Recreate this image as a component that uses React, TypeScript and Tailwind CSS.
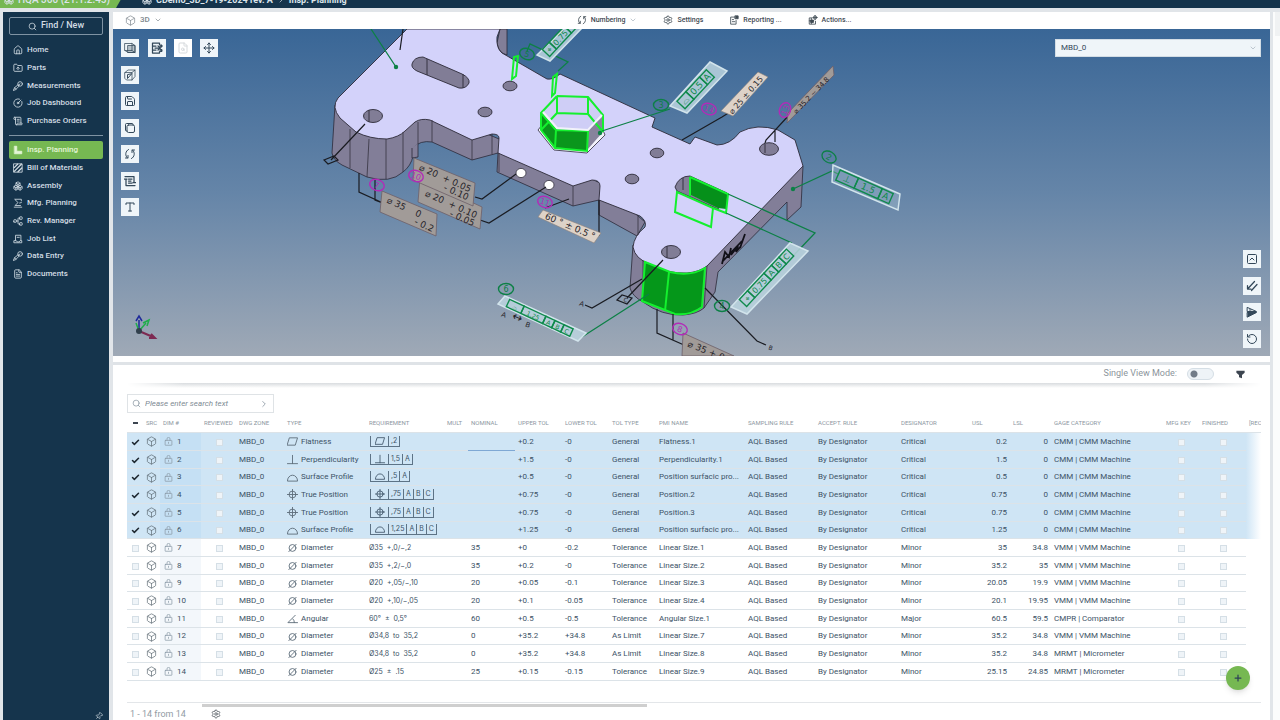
import { ReactNode } from 'react';
import {
  Box,
  Boxes,
  Check,
  ChevronDown,
  ChevronRight,
  CircleGauge,
  FileSearch,
  FileText,
  FolderUp,
  House,
  LucideIcon,
  Move,
  Network,
  Pin,
  Plus,
  RotateCcw,
  Save,
  ScrollText,
  Search,
  Settings,
  SquareChevronUp,
} from 'lucide-react';

interface IconProps {
  className?: string;
}

interface Row {
  id: number;
  type: string;
  requirement: string | string[];
  nominal: string;
  upper: string;
  lower: string;
  tolType: string;
  pmi: string;
  designator: string;
  usl: string;
  lsl: string;
  gage: string;
}

const Svg = ({ className, children }: IconProps & { children: ReactNode }) => (
  <svg viewBox="0 0 24 24" className={className} fill="none" stroke="currentColor" strokeWidth="2" strokeLinecap="round" strokeLinejoin="round">
    {children}
  </svg>
);

const CaliperIcon = ({ className }: IconProps) => (
  <Svg className={className}>
    <path d="M1 22l3-6 8-7 3 3-8 8z" />
    <circle cx="17" cy="7" r="5.5" />
    <path d="M4 16l3 4M13 10l4-3" />
  </Svg>
);

const SquareToolIcon = ({ className }: IconProps) => (
  <Svg className={className}>
    <path d="M4 3h5v12h12v6H4z" fill="currentColor" />
  </Svg>
);

const HatchIcon = ({ className }: IconProps) => (
  <Svg className={className}>
    <rect x="2" y="2" width="20" height="20" />
    <path d="M3 11l8-8M3 20L20 3M12 21l9-9" strokeWidth="3" />
  </Svg>
);

const RobotArmIcon = ({ className }: IconProps) => (
  <Svg className={className}>
    <path d="M20 7V3H4l8 8-7 7h13M3 22h18M16 12l4-1" />
  </Svg>
);

const JobListIcon = ({ className }: IconProps) => (
  <Svg className={className}>
    <path d="M6 15V3h13v12M3 16h5l2 3h5l2-3h4v5H3zM10 8h5" />
  </Svg>
);

const NumberingIcon = ({ className }: IconProps) => (
  <Svg className={className}>
    <path d="M9 3a10 10 0 0 0-2 17M3 20h5v-5M15 21a10 10 0 0 0 2-17M21 4h-5v5" />
  </Svg>
);

const ReportIcon = ({ className }: IconProps) => (
  <Svg className={className}>
    <path d="M13 5H4v17h13v-9M8 11h3M8 16h6" />
    <path d="M15 2h7v7h-7z" fill="currentColor" />
  </Svg>
);

const ActionsIcon = ({ className }: IconProps) => (
  <Svg className={className}>
    <path d="M10 7H3v15h15v-7M3 14h11M8 8v13" />
    <path d="M7 12h6v6H7z" fill="currentColor" />
    <circle cx="17" cy="6" r="4" />
    <path d="M17 1v10M12 6h10" />
  </Svg>
);

const SolidCubeIcon = ({ className }: IconProps) => (
  <Svg className={className}>
    <path d="M2 3h14v14H2zM16 3l6 4v14H8l-6-4M16 17l6 4" strokeWidth="1.5" />
    <path d="M8 7h14v14H8z" fill="currentColor" fillOpacity="0.3" strokeWidth="1.5" />
  </Svg>
);

const SectionCubeIcon = ({ className }: IconProps) => (
  <Svg className={className}>
    <path d="M2 7l6-5h14v13l-6 7H5l-3-3zM2 7h14v15M16 7l6-5" strokeWidth="1.5" />
    <path d="M7 12v7l8-9z" />
  </Svg>
);

const ExportIcon = ({ className }: IconProps) => (
  <Svg className={className}>
    <path d="M17 5V2H3v20h14v-3M3 8h7M3 16h7M8 12h10M14 8l5 4-5 4" strokeWidth="2.5" />
    <path d="M19 6h3v4h-3zM19 15h3v4h-3z" fill="currentColor" />
  </Svg>
);

const CopyIcon = ({ className }: IconProps) => (
  <Svg className={className}>
    <rect x="6" y="6" width="15" height="15" rx="3" />
    <path d="M6 18H5a2 2 0 0 1-2-2V5a2 2 0 0 1 2-2h11a2 2 0 0 1 2 2v1" />
  </Svg>
);

const BalloonIcon = ({ className }: IconProps) => (
  <Svg className={className}>
    <path d="M2 3h18v12M22 21H4V8M1 8h5M18 15h5M9 8h7M9 12h5M9 16h7" strokeWidth="2.5" />
  </Svg>
);

const TextIcon = ({ className }: IconProps) => (
  <Svg className={className}>
    <path d="M4 7V4h16v3M12 4v16M9 20h6" />
  </Svg>
);

const MeasureIcon = ({ className }: IconProps) => (
  <Svg className={className}>
    <path d="M17 3L4 17M3 11v7h7M22 9L11 21" strokeWidth="2.5" />
  </Svg>
);

const FlipIcon = ({ className }: IconProps) => (
  <Svg className={className}>
    <path d="M3 3l18 8H3zM7 8h3" />
    <path d="M3 13h18L3 22z" fill="currentColor" />
  </Svg>
);

const FilterIcon = ({ className }: IconProps) => (
  <svg viewBox="0 0 24 24" className={className} fill="currentColor">
    <path d="M1 2h22v5l-7 6v9l-8-3v-6L1 7z" />
  </svg>
);

const LockIcon = ({ className }: IconProps) => (
  <Svg className={className}>
    <rect x="3" y="9" width="18" height="13" rx="1" />
    <path d="M8 9V5a4 4 0 0 1 8 0v4M12 14v3" />
  </Svg>
);

const GdtIcon = ({ type, className }: IconProps & { type: string }) => (
  <Svg className={className}>
    {type === 'Flatness' && <path d="M6 4h17l-5 16H1z" />}
    {type === 'Perpendicularity' && <path d="M12 3v18M1 21h22" />}
    {type === 'Surface Profile' && <path d="M1 19a11 12 0 0 1 22 0z" />}
    {type === 'Diameter' && (
      <>
        <circle cx="12" cy="13" r="7.5" />
        <path d="M4 21L20 5" />
      </>
    )}
    {type === 'Angular' && <path d="M23 21H2L18 5M13 13a10 10 0 0 1 3 8" />}
    {type === 'True Position' && (
      <>
        <circle cx="12" cy="12" r="7.5" />
        <path d="M12 0v24M0 12h24" />
      </>
    )}
  </Svg>
);

const mainLinks = [
  { label: 'Home', icon: House },
  { label: 'Parts', icon: FolderUp },
  { label: 'Measurements', icon: CaliperIcon },
  { label: 'Job Dashboard', icon: CircleGauge },
  { label: 'Purchase Orders', icon: ScrollText },
];

const moduleLinks = [
  { label: 'Insp. Planning', icon: SquareToolIcon, active: true },
  { label: 'Bill of Materials', icon: HatchIcon },
  { label: 'Assembly', icon: Boxes },
  { label: 'Mfg. Planning', icon: RobotArmIcon },
  { label: 'Rev. Manager', icon: Network, rotate: true },
  { label: 'Job List', icon: JobListIcon },
  { label: 'Data Entry', icon: CaliperIcon },
  { label: 'Documents', icon: FileText },
];

const columns = [
  { label: 'SRC', width: 'w-[17px]' },
  { label: 'DIM #', width: 'w-[41px]' },
  { label: 'REVIEWED', width: 'w-[35px]' },
  { label: 'DWG ZONE', width: 'w-[48px]' },
  { label: 'TYPE', width: 'w-[82px]' },
  { label: 'REQUIREMENT', width: 'w-[78px]' },
  { label: 'MULT', width: 'w-[24px]' },
  { label: 'NOMINAL', width: 'w-[47px]' },
  { label: 'UPPER TOL', width: 'w-[47px]' },
  { label: 'LOWER TOL', width: 'w-[47px]' },
  { label: 'TOL TYPE', width: 'w-[47px]' },
  { label: 'PMI NAME', width: 'w-[89px]' },
  { label: 'SAMPLING RULE', width: 'w-[70px]' },
  { label: 'ACCEPT. RULE', width: 'w-[83px]' },
  { label: 'DESIGNATOR', width: 'w-[71px]' },
  { label: 'USL', width: 'w-[41px]' },
  { label: 'LSL', width: 'w-[41px]' },
  { label: 'GAGE CATEGORY', width: 'w-[112px]' },
  { label: 'MFG KEY', width: 'w-[36px]' },
  { label: 'FINISHED', width: 'w-[47px]' },
  { label: '[REC', width: 'w-[15px]' },
];

const makeRow = (
  id: number, type: string, requirement: string | string[], nominal: string, upper: string, lower: string,
  tolType: string, pmi: string, designator: string, usl: string, lsl: string, gage: string,
): Row => ({ id, type, requirement, nominal, upper, lower, tolType, pmi, designator, usl, lsl, gage });

const CMM = 'CMM | CMM Machine';
const VMM = 'VMM | VMM Machine';
const MIC = 'MRMT | Micrometer';

const rows: Row[] = [
  makeRow(1, 'Flatness', [',2'], '', '+0.2', '-0', 'General', 'Flatness.1', 'Critical', '0.2', '0', CMM),
  makeRow(2, 'Perpendicularity', ['1,5', 'A'], '', '+1.5', '-0', 'General', 'Perpendicularity.1', 'Critical', '1.5', '0', CMM),
  makeRow(3, 'Surface Profile', [',5', 'A'], '', '+0.5', '-0', 'General', 'Position surfacic pro...', 'Critical', '0.5', '0', CMM),
  makeRow(4, 'True Position', [',75', 'A', 'B', 'C'], '', '+0.75', '-0', 'General', 'Position.2', 'Critical', '0.75', '0', CMM),
  makeRow(5, 'True Position', [',75', 'A', 'B', 'C'], '', '+0.75', '-0', 'General', 'Position.3', 'Critical', '0.75', '0', CMM),
  makeRow(6, 'Surface Profile', ['1,25', 'A', 'B', 'C'], '', '+1.25', '-0', 'General', 'Position surfacic pro...', 'Critical', '1.25', '0', CMM),
  makeRow(7, 'Diameter', 'Ø35  +,0/−,2', '35', '+0', '-0.2', 'Tolerance', 'Linear Size.1', 'Minor', '35', '34.8', VMM),
  makeRow(8, 'Diameter', 'Ø35  +,2/−,0', '35', '+0.2', '-0', 'Tolerance', 'Linear Size.2', 'Minor', '35.2', '35', VMM),
  makeRow(9, 'Diameter', 'Ø20  +,05/−,10', '20', '+0.05', '-0.1', 'Tolerance', 'Linear Size.3', 'Minor', '20.05', '19.9', VMM),
  makeRow(10, 'Diameter', 'Ø20  +,10/−,05', '20', '+0.1', '-0.05', 'Tolerance', 'Linear Size.4', 'Minor', '20.1', '19.95', VMM),
  makeRow(11, 'Angular', '60°  ±  0,5°', '60', '+0.5', '-0.5', 'Tolerance', 'Angular Size.1', 'Major', '60.5', '59.5', 'CMPR | Comparator'),
  makeRow(12, 'Diameter', 'Ø34,8  to  35,2', '0', '+35.2', '+34.8', 'As Limit', 'Linear Size.7', 'Minor', '35.2', '34.8', VMM),
  makeRow(13, 'Diameter', 'Ø34,8  to  35,2', '0', '+35.2', '+34.8', 'As Limit', 'Linear Size.8', 'Minor', '35.2', '34.8', MIC),
  makeRow(14, 'Diameter', 'Ø25  ±  .15', '25', '+0.15', '-0.15', 'Tolerance', 'Linear Size.9', 'Minor', '25.15', '24.85', MIC),
];

function NavLink({ label, icon: Icon, active, rotate }: { label: string; icon: LucideIcon | typeof CaliperIcon; active?: boolean; rotate?: boolean }) {
  return (
    <li className="h-[18px] nth-[3n]:h-[17px]">
      <a
        href="#"
        className={`flex h-full items-center gap-1 rounded-xs pl-1 text-[8px] font-medium ${active ? 'bg-[#76b852] text-[#e4f5d6]' : 'text-[#d3dde4]'}`}
      >
        <Icon className={`size-[10px] ${rotate ? '-rotate-90' : ''}`} />
        {label}
      </a>
    </li>
  );
}

function Sidebar() {
  return (
    <aside className="flex w-[106px] shrink-0 flex-col overflow-hidden bg-[#15344c] px-1.5 pt-[5px]">
      <button className="flex h-[18px] shrink-0 items-center justify-center gap-1 rounded-xs border border-[#7f93a3] text-[9px] font-medium text-[#d3dde4]">
        <Search className="size-[9px]" />
        Find / New
      </button>
      <ul className="mt-1.5">
        {mainLinks.map((link) => (
          <NavLink key={link.label} {...link} />
        ))}
      </ul>
      <hr className="mt-[5px] mb-[5px] border-[#7f93a3]" />
      <ul>
        {moduleLinks.map((link) => (
          <NavLink key={link.label} {...link} />
        ))}
      </ul>
      <Pin className="mt-auto size-2 shrink-0 rotate-45 self-end text-[#d3dde4]" />
    </aside>
  );
}

function ToolButton({ label, icon: Icon, disabled }: { label: string; icon: LucideIcon | typeof CaliperIcon; disabled?: boolean }) {
  return (
    <button
      aria-label={label}
      disabled={disabled}
      className="grid size-[18px] place-items-center bg-[#eff5f9] text-[#33485a] disabled:bg-white disabled:text-[#d5d9dc]"
    >
      <Icon className="size-3" />
    </button>
  );
}

// Number balloon placed next to a callout
function Balloon({ x, y, n, color, angle = 20 }: { x: number; y: number; n: string; color: string; angle?: number }) {
  return (
    <g transform={`translate(${x} ${y}) rotate(${angle})`} stroke={color} fill="none">
      <ellipse rx="7.5" ry="5.5" strokeWidth="1.4" />
      <text textAnchor="middle" y="3" fontSize="8" fill={color} stroke="none">{n}</text>
    </g>
  );
}

function Callout({ x, y, angle, size = 9, color = '#26242a', children }: { x: number; y: number; angle: number; size?: number; color?: string; children: ReactNode }) {
  return (
    <text transform={`translate(${x} ${y}) rotate(${angle})`} fontSize={size} fill={color} textAnchor="middle" className="whitespace-pre">
      {children}
    </text>
  );
}

// Feature control frame: cells laid along a rotated strip
function Frame({ x, y, angle, cells, height = 10 }: { x: number; y: number; angle: number; cells: [string, number][]; height?: number }) {
  let offset = 0;
  return (
    <g transform={`translate(${x} ${y}) rotate(${angle})`} stroke="#0f8a4c" fill="none" strokeWidth="1.4">
      {cells.map(([text, width], i) => {
        const left = offset;
        offset += width;
        return (
          <g key={i}>
            <rect x={left} y={-height / 2} width={width} height={height} />
            <text x={left + width / 2} y="3" textAnchor="middle" fontSize={height - 2} fill="#0f8a4c" stroke="none">{text}</text>
          </g>
        );
      })}
    </g>
  );
}

function Scene() {
  return (
    <svg viewBox="113 29 1157 327" preserveAspectRatio="xMidYMid slice" className="absolute inset-0 size-full font-['DejaVu_Sans',sans-serif]">
      {/* side walls */}
      <g fill="#827e98" stroke="#2c2a38" strokeWidth="0.8" strokeLinejoin="round">
        <path d="M335 105L332 153Q333 160 342 165L367 177Q390 184 403 172Q411 166 413 156L413 148Q420 140 432 142L472 160L498 153L497 172L573 206L599 200V215L637 236L645 222L600 183L573 170L430 110L380 100Z" />
        <path d="M412 148V158L418 157V143" />
        <path d="M497 43Q498 50 502 53L507 55V29H500Z" />
        <path d="M633 245L630 288Q632 296 643 302Q662 316 683 315Q697 314 704 308L715 292L718 272L787 202V220L801 207L803 166L790 165L680 250Z" />
      </g>
      {/* top face */}
      <path
        d="M407 29L338 98Q331 107 340 118L356 132Q370 139 387 139Q399 137 405 131L415 122Q421 118 430 120L472 140L492 134Q499 134 499 138L498 153L573 186L592 180Q600 180 600 186L599 200L640 216Q647 221 645 227Q634 236 633 247Q635 259 650 264Q668 274 687 273Q699 272 707 266L803 166L795 140L778 130Q757 123 740 132Q730 145 717 145L695 137L690 144L652 127L655 118L560 74Q553 80 547 79L502 53Q496 48 497 37L500 29Z"
        fill="#d3d2fa"
        stroke="#2c2a38"
        strokeWidth="0.9"
      />
      <path
        d="M350 129V168M369 139L367 177M386 139V179M403 132V172M432 120V142M472 140V160M492 134V154M499 153V172M573 186V206M599 200V215M638 216V235M643 260V302M707 266L704 308M418 122V143"
        fill="none"
        stroke="#35323f"
        strokeWidth="0.8"
      />
      {/* slots and holes */}
      <g fill="#817d96" stroke="#2c2a38" strokeWidth="0.9">
        <path d="M412 64Q414 57 423 57L462 74Q470 78 469 83Q466 89 459 88L417 71Q411 68 412 64Z" />
        <path d="M427 59V75M463 74V88" />
        <ellipse cx="373" cy="116" rx="9.5" ry="6.5" />
        <ellipse cx="510" cy="86" rx="7" ry="4.8" />
        <ellipse cx="485" cy="112" rx="7" ry="4.8" />
        <ellipse cx="632" cy="179" rx="6.8" ry="4.8" />
        <ellipse cx="657" cy="153" rx="6.8" ry="4.8" />
        <ellipse cx="769" cy="149" rx="9.5" ry="6.3" />
        <ellipse cx="671" cy="252" rx="9.5" ry="6.5" />
        <path d="M675 187Q679 176 690 176L727 193L718 209L677 191Z" />
        <path d="M683 178V190M765 144V153M667 246V258M369 110V122" />
      </g>
      <g fill="#fff" stroke="#35323f" strokeWidth="0.8">
        <ellipse cx="521" cy="173" rx="5" ry="4.6" />
        <ellipse cx="549" cy="185" rx="5" ry="4.6" />
      </g>
      {/* hexagonal boss */}
      <path d="M538 130L554 150L587 153L605 135L602 128L586 147L556 146L542 125Z" fill="#f2f2fb" stroke="#2c2a38" strokeWidth="0.8" />
      <path d="M542 112L557 96L588 97L603 115L588 130L557 128Z" fill="#cfcef6" />
      <path d="M588 130L603 116L602 133L587 150Z" fill="#87839c" />
      <path d="M541 112L556 129L555 147L541 130ZM556 130L588 131L587 151L555 148Z" fill="#0a961c" />
      <path
        d="M557 96L588 97L603 115L603 132M557 96L541 113V130L555 148L587 151L588 131L556 130L541 113M556 130L555 148M557 96V113L588 114V97M557 113L541 130M588 114L603 132M512 79L514 57L518 56L516 76ZM552 96L553 77L557 74L555 93Z"
        fill="none"
        stroke="#14f02e"
        strokeWidth="2"
      />
      <path d="M543 112L557 128L588 130L602 115" fill="none" stroke="#f2f2fb" strokeWidth="2" />
      {/* selected pocket and corner */}
      <path d="M690 177L728 194L726 209L718 208L689 194Z" fill="#05901a" />
      <path d="M690 177L728 194L726 213L713 208L711 227L675 212L677 192L713 208M690 177V196" fill="none" stroke="#14f02e" strokeWidth="2" />
      <path d="M645 262L670 272Q690 277 705 268L702 307Q690 316 675 314L642 301Z" fill="#05971a" stroke="#14f02e" strokeWidth="2" />
      <path d="M669 272L665 311" stroke="#14f02e" strokeWidth="2" />
      {/* engraved mark */}
      <path d="M722 264L725 252L729 257L731 248M731 255L738 246L736 252L741 246M740 248L745 234M722 262L742 241" fill="none" stroke="#111018" strokeWidth="1.8" />

      {/* leaders */}
      <g fill="none" stroke="#1a1c22" strokeWidth="1.2">
        <path d="M365 124L331 160M324 160L334 156L338 160L328 164ZM403 29L400 50M359 173V192L383 203M375 180V200L385 204" />
        <path d="M475 197L482 199L516 174M480 220L489 223L546 187M545 208L569 199M599 200V236" />
        <path d="M682 140L722 117L730 112M765 143L766 140L790 114M775 142V131M663 260L627 298M642 279L592 308L585 305M617 300L622 295L632 298L627 304ZM705 288L757 341L766 345" />
        <path d="M657 309V333L684 345M673 314V340" />
      </g>
      <g fill="none" stroke="#0d8046" strokeWidth="1.3">
        <path d="M371 29L396 67M602 131L670 109M527 51L530 44L568 62L558 71M793 189L832 171L838 174M728 194L815 233L794 255M726 213L792 243M582 337L649 294" />
      </g>
      <g fill="#0d8046">
        <circle cx="396" cy="67" r="2.2" />
        <circle cx="600" cy="133" r="2.2" />
        <circle cx="793" cy="189" r="2.2" />
      </g>

      {/* dimension plates */}
      <g fill="#a19b98" stroke="#6d5f68" strokeWidth="0.8">
        <path d="M382 191L437 214L436 236L380 212Z" />
        <path d="M420 178L482 207L480 229L418 202Z" />
        <path d="M414 158L475 183L473 206L413 180Z" />
        <path d="M683 333L734 356H682Z" />
        <path d="M833 66L834 75L787 123L788 113Z" />
      </g>
      <g fill="#ddd2c8" stroke="#8b8078" strokeWidth="0.6">
        <path d="M543 210L601 233L594 243L538 217Z" />
        <path d="M758 72L768 77L733 116L721 111Z" />
      </g>
      <g fill="#bcd5df" fillOpacity="0.85" stroke="#d2e4ec" strokeWidth="1.5">
        <path d="M710 62L727 71L687 113L670 106Z" />
        <path d="M833 165L900 194L898 210L832 182Z" fillOpacity="0.3" />
        <path d="M790 243L808 251L747 314L731 307Z" />
        <path d="M505 296L586 333L578 341L498 304Z" />
        <path d="M565 28L582 28L550 61L537 55Z" />
      </g>
      <Callout x={403} y={210} angle={24}>⌀ 35    0</Callout>
      <Callout x={423} y={228} angle={24}>- 0.2</Callout>
      <Callout x={444} y={181} angle={24}>⌀ 20  + 0.05</Callout>
      <Callout x={455} y={195} angle={24}>- 0.10</Callout>
      <Callout x={450} y={207} angle={24}>⌀ 20  + 0.10</Callout>
      <Callout x={461} y={221} angle={24}>- 0.05</Callout>
      <Callout x={569} y={229} angle={23}>60 ° ± 0.5 °</Callout>
      <Callout x={748} y={97} angle={-49} size={8}>⌀ 25 ± 0.15</Callout>
      <Callout x={813} y={97} angle={-46} size={7}>⌀ 35.2 ~ 34.8</Callout>
      <Callout x={709} y={355} angle={22}>⌀ 35 + 0.2</Callout>
      <Callout x={581} y={306} angle={20} size={7}>A</Callout>
      <Callout x={625} y={302} angle={20} size={6}>C</Callout>
      <Callout x={503} y={317} angle={20} size={7}>A</Callout>
      <Callout x={516} y={321} angle={23} size={12}>↔</Callout>
      <Callout x={527} y={327} angle={20} size={7}>B</Callout>
      <Callout x={770} y={350} angle={20} size={6}>B</Callout>

      <Frame x={681} y={105} angle={-47} cells={[['⌓', 13], ['0.5', 20], ['A', 10]]} height={11} />
      <Frame x={838} y={175} angle={24} cells={[['⊥', 20], ['1.5', 26], ['A', 12]]} height={11} />
      <Frame x={743} y={303} angle={-47} cells={[['⌖', 12], ['0.75', 24], ['A', 11], ['B', 11], ['C', 11]]} height={10} />
      <Frame x={508} y={303} angle={25} cells={[['⌓', 16], ['1.25', 24], ['A', 10], ['B', 10], ['C', 10]]} height={8} />
      <Frame x={546} y={53} angle={-47} cells={[['⌖', 10], ['0.75', 22], ['A', 12]]} height={10} />

      <Balloon x={377} y={185} n="7" color="#b22bb8" />
      <Balloon x={416} y={176} n="10" color="#b22bb8" />
      <Balloon x={545} y={202} n="11" color="#b22bb8" />
      <Balloon x={709} y={109} n="14" color="#b22bb8" />
      <Balloon x={785} y={110} n="13" color="#b22bb8" angle={-70} />
      <Balloon x={680} y={329} n="8" color="#b22bb8" />
      <Balloon x={527} y={54} n="5" color="#0d8046" />
      <Balloon x={661} y={105} n="3" color="#0d8046" angle={0} />
      <Balloon x={829} y={157} n="2" color="#0d8046" angle={30} />
      <Balloon x={506} y={289} n="6" color="#0d8046" angle={0} />
      <Balloon x={722} y={306} n="4" color="#0d8046" angle={0} />

      {/* orientation axes */}
      <path d="M139 331L153 337M151 334l4 4-6 0" stroke="#7d2a52" strokeWidth="2" fill="none" />
      <path d="M139 331V320M136 321l3-5 3 5" stroke="#1e2a9a" strokeWidth="1.5" fill="none" />
      <path d="M139 331L146 323M143 323l6-3-2 6M139 331l-3-8" stroke="#1fae4a" strokeWidth="1.5" fill="none" />
      <circle cx="139" cy="331" r="3" fill="#31404d" />
    </svg>
  );
}

function Viewer() {
  return (
    <section className="relative h-[327px] shrink-0 overflow-hidden bg-linear-to-b from-[#396696] via-[#6585a8] to-[#9fa9b6]">
      <Scene />
      <div className="relative flex h-full justify-between pt-[10px] pr-[9px] pb-2 pl-2">
        <div className="flex items-start gap-[9px]">
          <div className="flex h-[177px] flex-col justify-between">
            <ToolButton label="Solid view" icon={SolidCubeIcon} />
            <ToolButton label="Section view" icon={SectionCubeIcon} />
            <ToolButton label="Save" icon={Save} />
            <ToolButton label="Copy" icon={CopyIcon} />
            <ToolButton label="Renumber" icon={NumberingIcon} />
            <ToolButton label="Balloons" icon={BalloonIcon} />
            <ToolButton label="Text" icon={TextIcon} />
          </div>
          <div className="flex gap-2">
            <ToolButton label="Export" icon={ExportIcon} />
            <ToolButton label="Inspect" icon={FileSearch} disabled />
            <ToolButton label="Move" icon={Move} />
          </div>
        </div>
        <div className="flex flex-col items-end justify-between">
          <div className="grid w-[206px] items-center">
            <select
              aria-label="View"
              defaultValue="MBD_0"
              className="col-start-1 row-start-1 h-[18px] appearance-none border border-[#d3dde5] bg-[#eff5f9] px-[5px] text-[8px] text-[#33485a]"
            >
              <option>MBD_0</option>
            </select>
            <ChevronDown className="pointer-events-none col-start-1 row-start-1 mr-1 size-2 justify-self-end text-[#a3afb9]" />
          </div>
          <div className="flex h-[98px] flex-col justify-between">
            <ToolButton label="Collapse" icon={SquareChevronUp} />
            <ToolButton label="Measure" icon={MeasureIcon} />
            <ToolButton label="Flip" icon={FlipIcon} />
            <ToolButton label="Reset" icon={RotateCcw} />
          </div>
        </div>
      </div>
    </section>
  );
}

function Checkbox({ label, checked }: { label: string; checked?: boolean }) {
  return (
    <span className="mx-auto grid size-2 place-items-center">
      <input
        type="checkbox"
        aria-label={label}
        defaultChecked={checked}
        className="peer col-start-1 row-start-1 size-[7px] appearance-none border border-[#d5dfe6] bg-[#eff4f8] checked:border-transparent checked:bg-transparent"
      />
      <Check strokeWidth={4} className="pointer-events-none invisible col-start-1 row-start-1 size-[9px] text-[#1d2730] peer-checked:visible" />
    </span>
  );
}

function Requirement({ row }: { row: Row }) {
  if (typeof row.requirement === 'string') {
    return <span className="font-['Inter',sans-serif] text-[7px] whitespace-pre">{row.requirement}</span>;
  }
  return (
    <span className="ml-px inline-flex h-[11px] border-b border-l border-[#5d7386] align-middle font-['Inter',sans-serif] text-[7px] leading-[10px]">
      <span className="grid w-[18px] place-items-center border-r border-[#5d7386]">
        <GdtIcon type={row.type} className="size-[10px]" />
      </span>
      {row.requirement.map((cell) => (
        <span key={cell} className="border-r border-[#5d7386] px-[2px]">{cell}</span>
      ))}
    </span>
  );
}

function DimensionRow({ row }: { row: Row }) {
  const selected = row.id <= 6;
  return (
    <tr className={`h-[18px] nth-[3n]:h-[17px] ${selected ? 'bg-[#cfe5f5]' : ''}`}>
      <td><Checkbox label={`Select ${row.id}`} checked={selected} /></td>
      <td><Box strokeWidth={1.5} className="size-[11px] text-[#5b6770]" /></td>
      <td className={selected ? 'bg-[#c5e0f4]' : 'bg-[#f3f7fb]'}>
        <span className="flex items-center gap-1 pl-px">
          <LockIcon className="size-[9px] text-[#8b9ba8]" />
          {row.id}
        </span>
      </td>
      <td><Checkbox label={`Reviewed ${row.id}`} /></td>
      <td>MBD_0</td>
      <td>
        <span className="flex items-center gap-[3px]">
          <GdtIcon type={row.type} className="size-[11px] text-[#5f6f7c]" />
          {row.type}
        </span>
      </td>
      <td><Requirement row={row} /></td>
      <td />
      <td className={row.id === 1 ? 'border-b-[#7fa8d4]!' : ''}>{row.nominal}</td>
      <td>{row.upper}</td>
      <td>{row.lower}</td>
      <td>{row.tolType}</td>
      <td>{row.pmi}</td>
      <td>AQL Based</td>
      <td>By Designator</td>
      <td>{row.designator}</td>
      <td className="text-right">{row.usl}</td>
      <td className="text-right">{row.lsl}</td>
      <td>{row.gage}</td>
      <td><Checkbox label={`Mfg key ${row.id}`} /></td>
      <td><Checkbox label={`Finished ${row.id}`} /></td>
      <td className={selected ? 'border-b-transparent! bg-white bg-linear-to-r from-[#cfe5f5] to-white bg-origin-border' : 'border-b-transparent!'} />
    </tr>
  );
}

function Dimensions() {
  return (
    <section className="relative flex grow flex-col pr-[9px] pl-[14px]">
      <div className="flex h-[18px] items-center justify-end pr-4 text-[9px] text-[#8b949b]">
        <label htmlFor="single-view">Single View Mode:</label>
        <input
          id="single-view"
          type="checkbox"
          role="switch"
          className="mr-[22px] ml-[10px] h-3 w-[27px] appearance-none rounded-full border border-[#d5dee5] bg-[#eef3f7] bg-[radial-gradient(circle_at_6px_5px,#727c88_3px,transparent_4px)]"
        />
        <button aria-label="Filter"><FilterIcon className="size-[9px] text-[#3d4550]" /></button>
      </div>
      <div className="h-[5px] bg-linear-to-b from-[#d9dcdf] to-white mask-x-from-95%" />

      <form className="mt-1.5 flex h-[19px] w-[147px] shrink-0 items-center border border-[#dfe3e6] px-1 text-[#8b98a3]">
        <Search className="size-[9px]" />
        <input
          type="search"
          aria-label="Search"
          placeholder="Please enter search text"
          className="ml-1 min-w-0 grow text-[8px] italic placeholder:text-[#808b94]"
        />
        <button type="button" aria-label="Run search"><ChevronRight className="size-[10px]" /></button>
      </form>

      <table className="mt-0.5 w-full table-fixed border-separate border-spacing-0 text-[8px] leading-4 text-[#3c5266] [&_td]:overflow-hidden [&_td]:border-b [&_td]:border-[#dce3e8] [&_td]:px-[3px] [&_td]:py-0 [&_td]:whitespace-nowrap">
        <thead>
          <tr className="h-[18px] text-left text-[6px] text-[#8d979f]">
            <th className="w-[16px] border-b border-[#dce3e8] pb-0.5">
              <button aria-label="Clear selection" className="mx-auto block h-[2px] w-[5px] bg-[#3d4550]" />
            </th>
            {columns.map(({ label, width }) => (
              <th key={label} className={`${width} overflow-hidden border-b border-[#dce3e8] px-[3px] pb-0.5 leading-3 font-normal whitespace-nowrap`}>
                {label}
              </th>
            ))}
          </tr>
        </thead>
        <tbody>
          {rows.map((row) => (
            <DimensionRow key={row.id} row={row} />
          ))}
        </tbody>
      </table>

      <button aria-label="Add dimension" className="absolute right-5 bottom-[30px] grid size-6 place-items-center rounded-full bg-[#76b852] text-[#2d4157] shadow-md">
        <Plus className="size-[10px]" strokeWidth={3} />
      </button>

      <footer className="mt-auto h-[18px] border-t border-[#e3e6e9]">
        <div className="mt-px ml-[75px] h-[3px] w-[445px] bg-[#cfcfcf]" />
        <div className="flex items-center pl-[3px] text-[9px] leading-[14px] text-[#929ca4]">
          <span className="w-[81px]">1 - 14 from 14</span>
          <button aria-label="Grid settings"><Settings className="size-[10px] text-[#555d64]" /></button>
        </div>
      </footer>
    </section>
  );
}

export default function App() {
  return (
    <div className="flex h-screen flex-col overflow-hidden bg-[#e1e5e9] font-['Roboto',sans-serif]">
      <header className="flex h-2 shrink-0 items-end overflow-hidden bg-[#15344c] text-[10px] leading-[12px] font-medium text-[#dce5eb]">
        <div className="flex w-[124px] items-center gap-1 bg-[#76b852] pb-0.5 pl-1 [clip-path:polygon(0_0,100%_0,calc(100%-8px)_100%,0_100%)]">
          <Boxes className="size-[10px]" />
          HQA 360 (21.1.2.45)
        </div>
        <div className="flex items-center gap-1 pb-0.5 pl-[18px] text-[9px] font-bold">
          <Boxes className="size-[10px]" />
          CDemo_3D_7-19-2024 rev. A
          <ChevronRight className="size-2" />
          Insp. Planning
        </div>
      </header>

      <div className="flex min-h-0 grow pt-1 pl-[3px]">
        <Sidebar />
        <main className="ml-1 flex min-w-0 grow flex-col bg-white">
          <nav className="flex h-[17px] shrink-0 items-center pb-px pl-3 text-[7px] font-medium text-[#3f4a53]">
            <button className="flex w-[33px] items-center gap-1 text-[8px] text-[#7d868d]">
              <Box className="size-[11px] shrink-0" strokeWidth={1.5} />
              3D
              <ChevronDown className="size-2 shrink-0" />
            </button>
            <div className="flex grow justify-center gap-[26px]">
              <button className="flex items-center gap-1">
                <NumberingIcon className="size-[10px]" />
                Numbering
                <ChevronDown className="size-2 text-[#a3afb9]" />
              </button>
              <button className="flex items-center gap-1">
                <Settings className="size-[10px]" />
                Settings
              </button>
              <button className="flex items-center gap-1">
                <ReportIcon className="size-[10px]" />
                Reporting ...
              </button>
              <button className="flex items-center gap-1">
                <ActionsIcon className="size-[10px]" />
                Actions...
              </button>
            </div>
          </nav>
          <Viewer />
          <div className="mt-1.5 h-[3px] shrink-0 bg-[#dfe3e7]" />
          <Dimensions />
        </main>
        <div className="ml-[3px] w-[7px] shrink-0 bg-[#fbfcfc]">
          <div className="ml-0.5 h-6 bg-[#f0f2f3]" />
        </div>
      </div>
    </div>
  );
}
